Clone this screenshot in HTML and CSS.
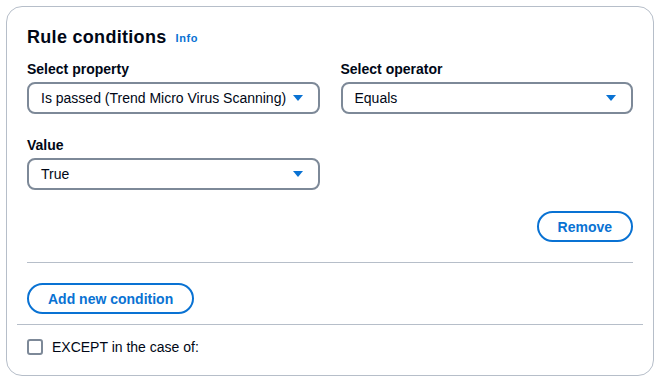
FILE: index.html
```html
<!DOCTYPE html>
<html lang="en">
<head>
    <meta charset="UTF-8">
    <meta name="viewport" content="width=device-width, initial-scale=1.0">
    <title>Rule conditions</title>
    <link rel="stylesheet" href="styles.css">
</head>
<body>
    <section class="card">
        <div class="card-body">
            <h2 class="title">Rule conditions <a href="#" class="info">Info</a></h2>

            <div class="fields">
                <div class="field">
                    <label class="field-label">Select property</label>
                    <div class="select">
                        <span>Is passed (Trend Micro Virus Scanning)</span>
                        <svg class="caret" width="10" height="6" viewBox="0 0 10 6"><path d="M0 0h10L5 6z"/></svg>
                    </div>
                </div>
                <div class="field">
                    <label class="field-label">Select operator</label>
                    <div class="select">
                        <span>Equals</span>
                        <svg class="caret" width="10" height="6" viewBox="0 0 10 6"><path d="M0 0h10L5 6z"/></svg>
                    </div>
                </div>
                <div class="field">
                    <label class="field-label">Value</label>
                    <div class="select">
                        <span>True</span>
                        <svg class="caret" width="10" height="6" viewBox="0 0 10 6"><path d="M0 0h10L5 6z"/></svg>
                    </div>
                </div>
            </div>

            <div class="remove-row">
                <button class="btn">Remove</button>
            </div>

            <hr class="divider">

            <button class="btn">Add new condition</button>
        </div>

        <hr class="divider wide">

        <label class="except">
            <span class="checkbox"></span>
            EXCEPT in the case of:
        </label>
    </section>
</body>
</html>
```

FILE: styles.css
```css
* {
    box-sizing: border-box;
    margin: 0;
    padding: 0;
}

body {
    font-family: "Liberation Sans", Arial, sans-serif;
    font-size: 14px;
    line-height: 22px;
    color: #000716;
    background-color: #fff;
}

.card {
    margin: 6px;
    height: 370px;
    border: 1px solid #b6bec9;
    border-radius: 16px;
}

.card-body {
    padding: 18px 20px 0 20px;
}

.title {
    font-size: 18px;
    line-height: 24px;
    height: 24px;
    font-weight: 700;
    letter-spacing: 0.3px;
    display: flex;
    align-items: baseline;
    gap: 9px;
}

.info {
    font-size: 11px;
    line-height: 1;
    letter-spacing: 0.6px;
    color: #0972d3;
    text-decoration: none;
    font-weight: 700;
    position: relative;
    top: -1px;
}

.fields {
    display: grid;
    grid-template-columns: 1fr 1fr;
    column-gap: 21px;
    row-gap: 20px;
    margin-top: 9px;
}

.field-label {
    display: block;
    font-weight: 700;
    margin-bottom: 2px;
}

.select {
    display: flex;
    align-items: center;
    justify-content: space-between;
    height: 32px;
    padding: 0 15px 0 12px;
    border: 2px solid #7d8998;
    border-radius: 8px;
}

.caret {
    fill: #0972d3;
}

.remove-row {
    display: flex;
    justify-content: flex-end;
    margin-top: 21px;
}

.btn {
    font-family: inherit;
    font-size: 14px;
    font-weight: 700;
    color: #0972d3;
    background: #fff;
    border: 2px solid #0972d3;
    border-radius: 20px;
    height: 31px;
    padding: 0 19px;
    cursor: pointer;
}

.divider {
    border: none;
    border-top: 1px solid #b6bec9;
    margin: 20px 0;
}

.divider.wide {
    margin: 10px 10px 0;
}

.except {
    display: flex;
    align-items: center;
    gap: 9px;
    padding: 11px 20px;
}

.checkbox {
    width: 16px;
    height: 16px;
    border: 2px solid #7d8998;
    border-radius: 3px;
}
```
